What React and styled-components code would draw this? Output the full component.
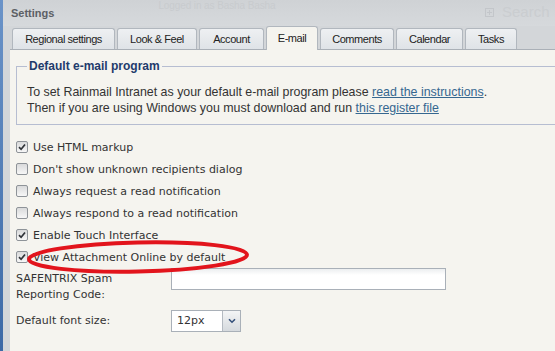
import React from 'react'
import styled, { createGlobalStyle } from 'styled-components'

const BEIGE = '#f5f4ef'
const FRAME = '#d3d6d9'

const GlobalStyle = createGlobalStyle`
    html, body {
        margin: 0;
        padding: 0;
        overflow: hidden;
        background: ${BEIGE};
    }
`

const Page = styled.div`
    position: relative;
    display: flex;
    width: 555px;
    height: 351px;
    overflow: hidden;
`
const Edge = styled.div`
    width: 3px;
    flex-shrink: 0;
    background: linear-gradient(#6a93c8, #3c69a6);
`
const Window = styled.div`
    flex: 1;
    min-width: 0;
    display: flex;
    flex-direction: column;
    background: ${FRAME};
    padding-left: 7px;
    overflow: hidden;
`
const TitleBar = styled.div`
    height: 26px;
    flex-shrink: 0;
    display: flex;
    align-items: flex-start;
    font-family: 'Liberation Sans', Arial, sans-serif;
    background: linear-gradient(#cfd2d5, #d6d9dc);
    margin-left: -7px;
    padding-left: 7px;
`
const Title = styled.div`
    padding: 6px 0 0 1px;
    font-size: 11px;
    font-weight: bold;
    line-height: 14px;
    color: #5c6065;
`
const Ghost = styled.div`
    margin-left: 104px;
    font-size: 10px;
    letter-spacing: -0.1px;
    line-height: 12px;
    color: #c8cbce;
    white-space: nowrap;
`
const Tools = styled.div`
    margin-left: auto;
    width: 70px;
    display: flex;
    align-items: center;
    gap: 8px;
    padding-top: 5px;
    white-space: nowrap;
    overflow: hidden;
    color: #cacdd0;
    font-size: 15px;
    line-height: 14px;
`
const PlusBox = styled.span`
    width: 7px;
    height: 7px;
    flex-shrink: 0;
    border: 1px solid #c3c6ca;
    position: relative;
    &::before, &::after {
        content: '';
        position: absolute;
        background: #c3c6ca;
    }
    &::before { left: 1px; right: 1px; top: 3px; height: 1px; }
    &::after { top: 1px; bottom: 1px; left: 3px; width: 1px; }
`
const TabStrip = styled.div`
    height: 23px;
    flex-shrink: 0;
    display: flex;
    align-items: flex-end;
    gap: 2px;
    padding-left: 2px;
    border-bottom: 1px solid #aab0b7;
    font-family: 'Liberation Sans', Arial, sans-serif;
`
const Tab = styled.div`
    width: ${p => p.$w}px;
    height: ${p => (p.$active ? 24 : 21)}px;
    margin-bottom: ${p => (p.$active ? -1 : 0)}px;
    box-sizing: border-box;
    display: flex;
    align-items: center;
    justify-content: center;
    border: 1px solid #b1b7be;
    border-bottom: none;
    border-radius: 3px 3px 0 0;
    background: ${p => (p.$active ? BEIGE : 'linear-gradient(#eef0f2, #dfe3e7)')};
    font-size: 11px;
    letter-spacing: -0.45px;
    color: #222;
    padding-bottom: ${p => (p.$active ? 2 : 0)}px;
`
const Content = styled.div`
    flex: 1;
    background: ${BEIGE};
    padding: 9px 0 0 6px;
`
const Group = styled.fieldset`
    margin: 0 -30px 0 0;
    padding: 11px 0 8px 10px;
    border: 1px solid #b6bdd1;
    min-width: 0;
`
const Legend = styled.legend`
    padding: 0 2px;
    font-family: 'Liberation Sans', Arial, sans-serif;
    font-size: 12px;
    font-weight: bold;
    line-height: 14px;
    color: #1f3b6c;
`
const Para = styled.p`
    margin: 0;
    font-family: 'Liberation Sans', Arial, sans-serif;
    font-size: 12.4px;
    line-height: 16px;
    color: #333;
    white-space: nowrap;
`
const Link = styled.a`
    color: #356790;
    text-decoration: underline;
`
const Checks = styled.div`
    margin-top: 11px;
    display: flex;
    flex-direction: column;
`
const CheckRow = styled.label`
    height: 22px;
    display: flex;
    align-items: center;
    gap: 5px;
    font-family: 'DejaVu Sans', Verdana, sans-serif;
    font-size: 11px;
    color: #333;
`
const Box = styled.span`
    width: 12px;
    height: 12px;
    box-sizing: border-box;
    border: 1px solid #8e9398;
    border-radius: 2px;
    background: linear-gradient(#d9dadb, #f7f7f7);
    display: flex;
    align-items: center;
    justify-content: center;
`
const FormRow = styled.div`
    display: grid;
    grid-template-columns: 155px auto;
    align-items: start;
    margin-top: ${p => p.$gap || 0}px;
    font-family: 'DejaVu Sans', Verdana, sans-serif;
    font-size: 11px;
    color: #333;
`
const FieldLabel = styled.div`
    padding-top: ${p => p.$pad}px;
    line-height: 16px;
`
const TextInput = styled.div`
    width: 275px;
    height: 22px;
    box-sizing: border-box;
    border: 1px solid #a9b0b8;
    background: linear-gradient(#eceef0, #ffffff 6px);
`
const Select = styled.div`
    width: 70px;
    height: 22px;
    box-sizing: border-box;
    border: 1px solid #a9b0b8;
    background: #fff;
    display: flex;
`
const SelectValue = styled.div`
    flex: 1;
    padding-left: 5px;
    line-height: 20px;
`
const SelectButton = styled.div`
    width: 17px;
    border-left: 1px solid #b4bac1;
    background: linear-gradient(#f4f5f6, #d6dade);
    display: flex;
    align-items: center;
    justify-content: center;
`
const Annotation = styled.svg`
    position: absolute;
    left: 0;
    top: 0;
    pointer-events: none;
`

const tabs = [
    { label: 'Regional settings', w: 103 },
    { label: 'Look & Feel', w: 80 },
    { label: 'Account', w: 65 },
    { label: 'E-mail', w: 52, active: true },
    { label: 'Comments', w: 74 },
    { label: 'Calendar', w: 67 },
    { label: 'Tasks', w: 52 }
]

const options = [
    { label: 'Use HTML markup', checked: true },
    { label: "Don't show unknown recipients dialog" },
    { label: 'Always request a read notification' },
    { label: 'Always respond to a read notification' },
    { label: 'Enable Touch Interface', checked: true },
    { label: 'View Attachment Online by default', checked: true }
]

const Check = ({ checked }) => (
    <Box>
        {checked && (
            <svg width="8" height="8" viewBox="0 0 8 8">
                <path d="M1 4.2 L3.1 6.3 L7 1.5" fill="none" stroke="#2f3338" strokeWidth="1.7" />
            </svg>
        )}
    </Box>
)

export default function App() {
    return (
        <Page>
            <GlobalStyle />
            <Edge />
            <Window>
                <TitleBar>
                    <Title>Settings</Title>
                    <Ghost>Logged in as Basha Basha</Ghost>
                    <Tools>
                        <PlusBox />
                        <span>Search</span>
                    </Tools>
                </TitleBar>
                <TabStrip>
                    {tabs.map(t => (
                        <Tab key={t.label} $w={t.w} $active={t.active}>{t.label}</Tab>
                    ))}
                </TabStrip>
                <Content>
                    <Group>
                        <Legend>Default e-mail program</Legend>
                        <Para>
                            To set Rainmail Intranet as your default e-mail program please <Link>read the instructions</Link>.
                        </Para>
                        <Para>
                            Then if you are using Windows you must download and run <Link>this register file</Link>
                        </Para>
                    </Group>
                    <Checks>
                        {options.map(o => (
                            <CheckRow key={o.label}>
                                <Check checked={o.checked} />
                                {o.label}
                            </CheckRow>
                        ))}
                    </Checks>
                    <FormRow>
                        <FieldLabel $pad={3}>SAFENTRIX Spam<br />Reporting Code:</FieldLabel>
                        <TextInput />
                    </FormRow>
                    <FormRow $gap={7}>
                        <FieldLabel $pad={3}>Default font size:</FieldLabel>
                        <Select>
                            <SelectValue>12px</SelectValue>
                            <SelectButton>
                                <svg width="8" height="6" viewBox="0 0 8 6">
                                    <path d="M1 1.2 L4 4.2 L7 1.2" fill="none" stroke="#34507a" strokeWidth="1.6" />
                                </svg>
                            </SelectButton>
                        </Select>
                    </FormRow>
                </Content>
            </Window>
            <Annotation width="555" height="351">
                <ellipse cx="138" cy="257" rx="109" ry="14.5" fill="none" stroke="#e2141c" strokeWidth="4" transform="rotate(-1.2 138 257)" />
            </Annotation>
        </Page>
    )
}
